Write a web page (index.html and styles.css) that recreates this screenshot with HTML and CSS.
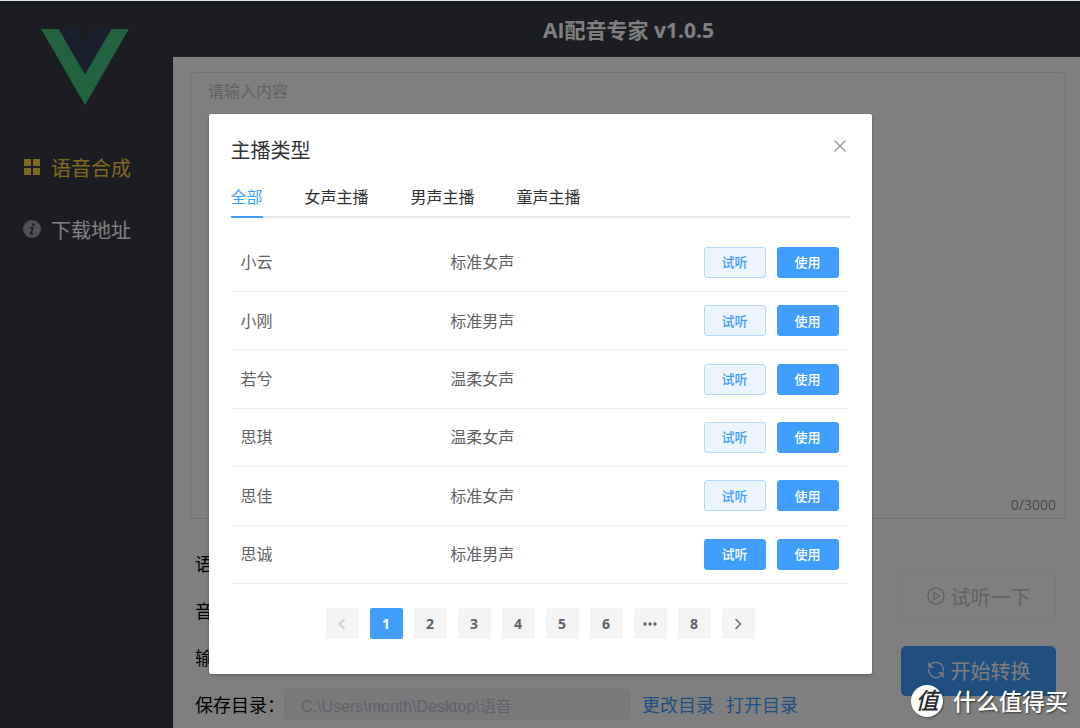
FILE: index.html
```html
<!DOCTYPE html>
<html lang="zh-CN">
<head>
<meta charset="utf-8">
<title>AI配音专家 v1.0.5</title>
<link rel="stylesheet" href="styles.css">
</head>
<body>
<div class="app">
  <aside class="sidebar">
    <svg class="logo" viewBox="0 0 262 227" aria-hidden="true"><path fill="#44c47e" d="M161 0l-30 52L101 0H0l131 227L262 0z"/><path fill="#353f5c" d="M161 0l-30 52L101 0H52l79 136L210 0z"/></svg>
    <nav class="menu">
      <a class="menu-item active" href="#tts"><svg class="menu-icon" viewBox="0 0 18 18" aria-hidden="true"><path fill="currentColor" d="M1 1h7v7H1zM10 1h7v7h-7zM1 10h7v7H1zM10 10h7v7h-7z"/></svg><span>语音合成</span></a>
      <a class="menu-item" href="#download"><svg class="menu-icon" viewBox="0 0 18 18" aria-hidden="true"><circle cx="9" cy="9" r="9" fill="#a0a0a2"/><path d="M7 7.800h2.700L8 13.500h2" fill="none" stroke="#383b44" stroke-width="1.600"/><circle cx="10.300" cy="4.700" r="1.300" fill="#383b44"/></svg><span>下载地址</span></a>
    </nav>
  </aside>
  <div class="content">
    <header class="header"><h1>AI配音专家 v1.0.5</h1></header>
    <main class="main">
      <div class="editor">
        <textarea class="editor-text" placeholder="请输入内容" aria-label="内容"></textarea>
        <div class="counter">0/3000</div>
      </div>
      <div class="settings">
        <div class="fields">
          <div class="field"><span class="label">语</span></div>
          <div class="field"><span class="label">音</span></div>
          <div class="field"><span class="label">输</span></div>
          <div class="field">
            <label class="label" for="dir">保存目录：</label>
            <input class="path" id="dir" type="text" value="C:\Users\month\Desktop\语音" disabled>
            <a class="link" href="#change">更改目录</a>
            <a class="link" href="#open">打开目录</a>
          </div>
        </div>
        <div class="actions">
          <button class="action" type="button" disabled><svg class="action-icon" viewBox="0 0 18 18" fill="none" stroke="currentColor" stroke-width="1.400" stroke-linejoin="round" aria-hidden="true"><circle cx="9" cy="9" r="8"/><path d="M7 5.500v7L12.500 9z"/></svg>试听一下</button>
          <button class="action action-primary" type="button"><svg class="action-icon" viewBox="0 0 18 18" fill="none" stroke="currentColor" stroke-width="1.400" stroke-linecap="round" stroke-linejoin="round" aria-hidden="true"><path d="M2 2v4h4M2.300 5.700A7.300 7.300 0 0 1 16.200 9.500M16 16v-4h-4M15.700 12.300A7.300 7.300 0 0 1 1.800 8.500"/></svg>开始转换</button>
        </div>
      </div>
    </main>
  </div>

  <div class="overlay">
    <section class="dialog" role="dialog" aria-labelledby="dialog-title">
      <div class="dialog-head">
        <h2 id="dialog-title">主播类型</h2>
        <button class="close" type="button" aria-label="关闭"><svg viewBox="0 0 12 12" width="12" height="12" fill="none" stroke="currentColor" stroke-width="1.200"><path d="M.5.5l11 11M11.500.5l-11 11"/></svg></button>
      </div>
      <div class="tabs" role="tablist">
        <button class="tab selected" type="button" role="tab" aria-selected="true">全部</button>
        <button class="tab" type="button" role="tab">女声主播</button>
        <button class="tab" type="button" role="tab">男声主播</button>
        <button class="tab" type="button" role="tab">童声主播</button>
      </div>
      <table class="voices">
        <tbody>
          <tr><td class="name">小云</td><td>标准女声</td><td class="ops"><button class="btn plain" type="button">试听</button><button class="btn" type="button">使用</button></td></tr>
          <tr><td class="name">小刚</td><td>标准男声</td><td class="ops"><button class="btn plain" type="button">试听</button><button class="btn" type="button">使用</button></td></tr>
          <tr><td class="name">若兮</td><td>温柔女声</td><td class="ops"><button class="btn plain" type="button">试听</button><button class="btn" type="button">使用</button></td></tr>
          <tr><td class="name">思琪</td><td>温柔女声</td><td class="ops"><button class="btn plain" type="button">试听</button><button class="btn" type="button">使用</button></td></tr>
          <tr><td class="name">思佳</td><td>标准女声</td><td class="ops"><button class="btn plain" type="button">试听</button><button class="btn" type="button">使用</button></td></tr>
          <tr><td class="name">思诚</td><td>标准男声</td><td class="ops"><button class="btn" type="button">试听</button><button class="btn" type="button">使用</button></td></tr>
        </tbody>
      </table>
      <nav class="pager" aria-label="分页">
        <button class="page" type="button" disabled aria-label="上一页"><svg viewBox="0 0 8 12" width="8" height="12" fill="none" stroke="currentColor" stroke-width="1.300"><path d="M6.500 1l-5 5 5 5"/></svg></button>
        <button class="page current" type="button">1</button>
        <button class="page" type="button">2</button>
        <button class="page" type="button">3</button>
        <button class="page" type="button">4</button>
        <button class="page" type="button">5</button>
        <button class="page" type="button">6</button>
        <button class="page" type="button" aria-label="更多"><svg viewBox="0 0 14 4" width="14" height="4" fill="currentColor"><circle cx="2" cy="2" r="1.700"/><circle cx="7" cy="2" r="1.700"/><circle cx="12" cy="2" r="1.700"/></svg></button>
        <button class="page" type="button">8</button>
        <button class="page" type="button" aria-label="下一页"><svg viewBox="0 0 8 12" width="8" height="12" fill="none" stroke="currentColor" stroke-width="1.300"><path d="M1.500 1l5 5-5 5"/></svg></button>
      </nav>
    </section>
  </div>
  <div class="watermark"><span class="badge">值</span><span>什么值得买</span></div>
</div>
</body>
</html>
```
FILE: styles.css
```css
* { box-sizing: border-box; }
body {
  margin: 0;
  font-family: "Open Sans", "Noto Sans CJK SC", sans-serif;
  font-size: 16px;
  color: #000;
}
button, input, textarea { font: inherit; margin: 0; }
button { cursor: pointer; }
a { text-decoration: none; }
h1, h2 { margin: 0; }

.app {
  position: relative;
  display: flex;
  height: 100vh;
  border-top: 1px solid #dfe8e8;
  background: #383b44;
  overflow: hidden;
}

/* Sidebar */
.sidebar { flex: 0 0 173px; padding-top: 28px; }
.logo { display: block; width: 88px; height: 76px; margin-left: 41px; }
.menu { display: flex; flex-direction: column; gap: 30px; padding: 46px 0 0 23px; }
.menu-item {
  display: flex;
  align-items: center;
  gap: 10px;
  font-size: 20px;
  line-height: 28px;
  color: #fff;
}
.menu-item span { padding-top: 4px; }
.menu-item.active { color: #ffd040; }
.menu-icon { width: 18px; height: 18px; }

/* Page */
.content { flex: 1; min-width: 0; display: flex; flex-direction: column; }
.header {
  flex: 0 0 56px;
  display: flex;
  align-items: center;
  justify-content: center;
  padding: 2px 0 0 4px;
  color: #fff;
}
.header h1 { font-size: 21px; line-height: 28px; }
.main {
  flex: 1;
  min-height: 0;
  display: flex;
  flex-direction: column;
  padding: 15px 14px 8px 17px;
  background: #fff;
}
.editor {
  flex: 1;
  min-height: 0;
  display: flex;
  flex-direction: column;
  border: 1px solid #e4e4e8;
  border-radius: 4px;
}
.editor-text {
  flex: 1;
  resize: none;
  border: 0;
  background: transparent;
  padding: 6px 17px;
  line-height: 24px;
}
.editor-text::placeholder { color: #c0c4cc; opacity: 1; }
.counter {
  padding: 0 9px 3px 0;
  text-align: right;
  font-size: 14px;
  line-height: 20px;
  color: #909399;
}
.settings { display: flex; gap: 103px; padding: 29px 10px 0 5px; }
.fields { flex: 1; display: flex; flex-direction: column; gap: 16px; }
.field { display: flex; align-items: center; gap: 12px; height: 31px; font-size: 18px; }
.label { flex: 0 0 77px; min-width: 0; white-space: nowrap; }
.label, .link { padding-bottom: 2px; }
.path {
  flex: 1;
  min-width: 0;
  height: 31px;
  padding: 0 16px;
  border: 1px solid #eaebee;
  border-radius: 4px;
  background: #f2f3f6;
  color: #c0c4cc;
  font-family: "Liberation Sans", "Noto Sans CJK SC", sans-serif;
  font-size: 16px;
}
.link { color: #409eff; white-space: nowrap; }
.actions { display: flex; flex-direction: column; gap: 24px; padding-top: 24px; }
.action {
  display: flex;
  align-items: center;
  justify-content: center;
  gap: 6px;
  width: 155px;
  height: 50px;
  padding: 0 0 2px;
  border: 1px solid #f2f3f6;
  border-radius: 5px;
  background: #fff;
  color: #c0c4cc;
  font-size: 20px;
}
.action-primary { border-color: #409eff; background: #409eff; color: #fff; }
.action-icon { width: 18px; height: 18px; }

/* Dialog */
.overlay {
  position: absolute;
  inset: 0;
  display: flex;
  align-items: flex-start;
  justify-content: center;
  padding-top: 113px;
  background: rgba(0, 0, 0, 0.5);
}
.dialog {
  width: 90%;
  max-width: 663px;
  padding: 22px 22px 35px;
  border-radius: 2px;
  background: #fff;
  box-shadow: 0 1px 3px rgba(0, 0, 0, 0.3);
}
.dialog-head { display: flex; justify-content: space-between; }
.dialog-head h2 { font-size: 20px; font-weight: 400; line-height: 30px; color: #303133; }
.close {
  display: flex;
  align-items: center;
  justify-content: center;
  width: 20px;
  height: 20px;
  padding: 0;
  border: 0;
  background: none;
  color: #909399;
}
.tabs { display: flex; gap: 42px; margin-top: 13px; border-bottom: 2px solid #e4e7ed; }
.tab {
  height: 39px;
  margin-bottom: -2px;
  padding: 0 0 4px;
  border: 0;
  border-bottom: 2px solid transparent;
  background: none;
  color: #303133;
}
.tab.selected { color: #409eff; border-bottom-color: #409eff; }
.voices {
  width: calc(100% - 2px);
  height: 350px;
  margin-top: 16px;
  border-collapse: collapse;
  table-layout: fixed;
  color: #606266;
}
.voices td { padding: 0 10px 2px; border-bottom: 1px solid #ebeef5; }
.voices .name { width: 34%; }
.voices .ops { padding: 0 9px 0 0; text-align: right; font-size: 0; }
.btn {
  width: 62px;
  height: 31px;
  padding: 0;
  border: 1px solid #409eff;
  border-radius: 3px;
  background: #409eff;
  color: #fff;
  font-size: 13px;
  font-weight: 500;
  line-height: 20px;
}
.btn + .btn { margin-left: 11px; }
.btn.plain { border-color: #b3d8ff; background: #ecf5ff; color: #409eff; }
.pager { display: flex; justify-content: center; gap: 11px; margin-top: 24px; }
.page {
  display: flex;
  align-items: center;
  justify-content: center;
  width: 33px;
  height: 31px;
  padding: 0;
  border: 0;
  border-radius: 2px;
  background: #f4f4f5;
  color: #606266;
  font-size: 14px;
  font-weight: 700;
}
.page:disabled { color: #c0c4cc; }
.page.current { background: #409eff; color: #fff; }

.watermark {
  position: absolute;
  right: 12px;
  bottom: 11px;
  display: flex;
  align-items: center;
  gap: 10px;
  color: #fff;
  font-size: 23px;
  font-weight: 500;
  line-height: 30px;
  text-shadow: 1px 1px 2px rgba(0, 0, 0, 0.6);
}
.badge {
  width: 32px;
  height: 32px;
  border-radius: 50%;
  background: #fff;
  color: #2a2a2a;
  text-align: center;
  font-style: italic;
  line-height: 30px;
  text-shadow: none;
  box-shadow: 1px 1px 2px rgba(0, 0, 0, 0.4);
}
```
